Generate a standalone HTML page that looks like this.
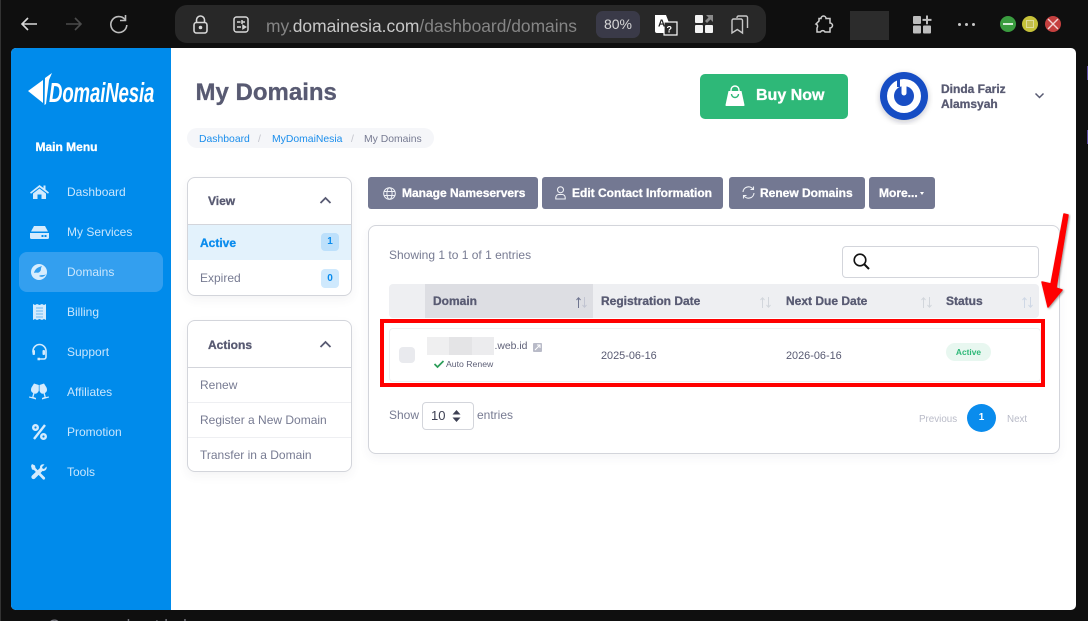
<!DOCTYPE html>
<html><head><meta charset="utf-8"><title>My Domains</title>
<style>
html,body{margin:0;padding:0;width:1088px;height:621px;overflow:hidden}
body{background:#0f0f0f;position:relative;font-family:"Liberation Sans",sans-serif}
.a{position:absolute}
.t{position:absolute;white-space:nowrap;line-height:16px}
.b{-webkit-text-stroke:.3px currentColor}
svg{position:absolute;overflow:visible}
.nav{color:#c9e6fd;font-size:12px;left:67px}
.card{position:absolute;left:187px;width:163px;background:#fff;border:1px solid #d3d5db;border-radius:8px;box-shadow:0 4px 10px rgba(60,60,90,.06);box-sizing:content-box}
.btn{position:absolute;top:177px;height:32px;background:#737892;border-radius:3px}
.g{color:#777b92;font-size:12px}
</style></head><body>
<div class="a" style="left:0;top:0;width:1px;height:621px;background:#333"></div>
<div class="a" style="left:1087px;top:66px;width:1px;height:14px;background:#5b4aa0"></div>
<div class="a" style="left:1087px;top:130px;width:1px;height:14px;background:#5b4aa0"></div>

<!-- browser chrome -->
<svg style="left:21px;top:17px" width="16" height="14" fill="none" stroke="#d8d8d8" stroke-width="1.6"><path d="M1 7H16M7 1L1 7L7 13"/></svg>
<svg style="left:66px;top:17px" width="16" height="14" fill="none" stroke="#4c4c4c" stroke-width="1.6"><path d="M0 7H15M9 1L15 7L9 13"/></svg>
<svg style="left:110px;top:15px" width="18" height="18" fill="none" stroke="#bdbdbd" stroke-width="1.6"><path d="M15 4.500A8 8 0 1 0 16.800 10"/><path d="M15.500 0V5.500H10" /></svg>
<div class="a" style="left:175px;top:5px;width:591px;height:38px;background:#282828;border-radius:12px"></div>
<svg style="left:193px;top:15px" width="15" height="19" fill="none" stroke="#d8d8d8" stroke-width="1.6"><rect x="1" y="7.500" width="13" height="10.500" rx="2.500"/><path d="M3.500 7.500V5a4 4 0 0 1 8 0V7.500"/><circle cx="7.500" cy="12.500" r="1" fill="#d8d8d8"/></svg>
<svg style="left:233px;top:16px" width="16" height="17" fill="none" stroke="#d8d8d8" stroke-width="1.5"><rect x="1" y="1" width="14" height="15" rx="2.500"/><path d="M4 6H7.500M9.500 6H12M9 4V8M4 11H8M10 9.500V12.500L12.500 11Z"/></svg>
<div class="t" style="left:266px;top:15px;font-size:17.4px;line-height:22px;color:#858585">my.<span style="color:#c8c8c8">domainesia.com</span>/dashboard/domains</div>
<div class="a" style="left:596px;top:11px;width:44px;height:27px;background:#3a3a48;border-radius:7px;color:#d8d8d8;font-size:14px;line-height:27px;text-align:center">80%</div>
<svg style="left:655px;top:14px" width="24" height="22"><path d="M0 1H11L18 19H2a2 2 0 0 1-2-2Z" fill="#fff"/><rect x="9" y="8" width="13" height="13" fill="#282828" stroke="#fff" stroke-width="1.2"/><text x="3" y="12.500" font-size="10" font-weight="700" font-family="Liberation Sans" fill="#222">A</text><text x="11.500" y="18.500" font-size="9" font-weight="700" font-family="Liberation Sans" fill="#fff">?</text></svg>
<svg style="left:695px;top:15px" width="20" height="20" fill="#f2f2f2"><rect x="0" y="0" width="8" height="8" rx="1"/><rect x="0" y="10" width="8" height="8" rx="1"/><rect x="10" y="10" width="8" height="8" rx="1"/><path d="M11 0H18V7L15.500 4.500L12 8L10 6L13.500 2.500Z" fill="#8a8a8a"/></svg>
<svg style="left:731px;top:15px" width="20" height="20" fill="none" stroke="#c8c8c8" stroke-width="1.400"><path d="M6 3V2.500a1.500 1.500 0 0 1 1.500-1.500H15a1.500 1.500 0 0 1 1.500 1.500V13"/><path d="M1 5.500A1.500 1.500 0 0 1 2.500 4H10a1.500 1.500 0 0 1 1.500 1.500V18L6.300 14.500L1 18Z"/></svg>
<svg style="left:814px;top:15px" width="20" height="19" fill="none" stroke="#cfcfcf" stroke-width="1.500"><path d="M7 3.500a2.500 2.500 0 0 1 5 0H16V8a2.500 2.500 0 0 1 0 5V17H11a2.500 2.500 0 0 0-4.500 0H3V13a2.500 2.500 0 0 0-1-4L5 6V3.500Z"/></svg>
<div class="a" style="left:850px;top:11px;width:39px;height:29px;background:#2c2c2c"></div>
<svg style="left:912px;top:15px" width="20" height="19" fill="#bdbdbd"><rect x="1" y="1" width="8" height="8" rx="1"/><rect x="1" y="10.500" width="8" height="8" rx="1"/><rect x="11" y="10.500" width="8" height="8" rx="1"/><path d="M14 0.500H16V3.900H19.500V5.900H16V9.300H14V5.900H10.500V3.900H14Z"/></svg>
<div class="a" style="left:958px;top:23px;width:3px;height:3px;background:#c8c8c8;border-radius:2px;box-shadow:7px 0 #c8c8c8,14px 0 #c8c8c8"></div>
<div class="a" style="left:1000px;top:16px;width:16px;height:16px;border-radius:50%;background:#3a9c3f"></div>
<div class="a" style="left:1003px;top:23px;width:10px;height:1.500px;background:#d8ecd8"></div>
<div class="a" style="left:1022px;top:16px;width:16px;height:16px;border-radius:50%;background:#c6c239"></div>
<div class="a" style="left:1026px;top:20px;width:8px;height:8px;background:#c2bd50;border:1px solid #dedb9a;box-sizing:border-box"></div>
<div class="a" style="left:1045px;top:16px;width:16px;height:16px;border-radius:50%;background:#c5403f"></div>
<svg style="left:1048px;top:19px" width="10" height="10" stroke="#f3d6d6" stroke-width="1.400"><path d="M0 0L10 10M10 0L0 10"/></svg>

<!-- partial text below window -->
<div class="a" style="left:0;top:610px;width:1088px;height:11px;overflow:hidden">
<div class="t" style="left:48px;top:7px;font-size:16.500px;line-height:18px;color:#77777f;letter-spacing:.2px">Cara membuat halaman</div>
</div>

<!-- window -->
<div class="a" style="left:11px;top:48px;width:1065px;height:562px;background:#fff;border-radius:5px"></div>
<div class="a" style="left:11px;top:48px;width:160px;height:562px;background:#008beb;border-radius:5px 0 0 5px"></div>

<!-- logo -->
<svg style="left:28px;top:73px" width="24" height="33" fill="#fff"><path d="M0 18L15 7V30ZM17 5L24 0L21 7L18 31L16.500 32Z"/></svg>
<div class="t" style="left:49px;top:77px;color:#fff;font-size:28px;line-height:32px;font-style:italic;font-weight:700;transform:scaleX(.665);transform-origin:0 0;letter-spacing:-.2px">DomaiNesia</div>
<div class="t b" style="left:35.500px;top:139px;color:#fff;font-size:12px;font-weight:700">Main Menu</div>
<div class="a" style="left:19px;top:252px;width:144px;height:40px;background:#339fef;border-radius:8px"></div>
<div class="t nav" style="top:184px">Dashboard</div>
<div class="t nav" style="top:224px">My Services</div>
<div class="t nav" style="top:264px">Domains</div>
<div class="t nav" style="top:304px">Billing</div>
<div class="t nav" style="top:344px">Support</div>
<div class="t nav" style="top:384px">Affiliates</div>
<div class="t nav" style="top:424px">Promotion</div>
<div class="t nav" style="top:464px">Tools</div>

<!-- nav icons -->
<svg style="left:30px;top:184px" width="19" height="16" fill="#d4ebfd"><path d="M9.500 1L13.500 4V1.500H15.500V5.500L19 8.500L18 9.800L9.500 3.200L1 9.800L0 8.500Z"/><path d="M3 9.500L9.500 4.500L16 9.500V15H11.500V10.500H7.500V15H3Z"/></svg>
<svg style="left:30px;top:226px" width="19" height="13" fill="#d4ebfd"><path d="M4 0H15L18 5.500H1Z"/><path d="M0 7H19V11.500a1.500 1.500 0 0 1-1.500 1.500H1.500A1.500 1.500 0 0 1 0 11.500Z"/><rect x="11.500" y="9" width="2" height="2" fill="#008beb"/><rect x="14.500" y="9" width="2" height="2" fill="#008beb"/></svg>
<svg style="left:31px;top:264px" width="16" height="16"><circle cx="8" cy="8" r="8" fill="#d7edfe"/><path d="M3 9C4 4 8 3 11 2C9 5 11 6 8.500 8C7 9.500 5 8 3 9ZM8 12C10 10.500 12 11.500 15 10.500C13 13 10 13.500 8 12Z" fill="#339fef"/></svg>
<svg style="left:33px;top:304px" width="13" height="16" fill="#d4ebfd"><path d="M0 0L2 1L4 0L6.500 1L9 0L11 1L13 0V16L11 15L9 16L6.500 15L4 16L2 15L0 16Z"/><path d="M3 4H10M3 7H10M3 10H10M3 13H10" stroke="#6db8f3" stroke-width="1"/></svg>
<svg style="left:31px;top:344px" width="17" height="16" fill="none" stroke="#d4ebfd" stroke-width="1.600"><path d="M2 8.500V7a6.500 6.500 0 0 1 13 0V13a2 2 0 0 1-2 2H8.500"/><rect x="1.500" y="6" width="2.500" height="5" rx="1" fill="#d4ebfd" stroke="none"/><rect x="11.500" y="6" width="2.500" height="5" rx="1" fill="#d4ebfd" stroke="none"/><path d="M6.500 15H9" stroke-width="2.500"/></svg>
<svg style="left:29px;top:383px" width="20" height="18" fill="#d4ebfd"><path d="M5 .5L9.800 2L9.800 7.500C9 10 7 11.200 5.500 10.500L4.500 14L7 15V16.500L0 14.500V13.500L3.200 14L4.200 10C2 9 1.500 7 2.500 4.500Z"/><path d="M15 .5L10.500 2L10.500 7.500C11 10 13 11.200 14.500 10.500L15.500 14L13 15V16.500L20 14.500V13.500L16.800 14L15.800 10C18 9 18.500 7 17.500 4.500Z"/></svg>
<svg style="left:32px;top:424px" width="15" height="16" fill="none" stroke="#d4ebfd" stroke-width="2.400"><path d="M13 1L2 15"/><circle cx="3.500" cy="3.500" r="2.300"/><circle cx="11.500" cy="12.500" r="2.300"/></svg>
<svg style="left:31px;top:464px" width="16" height="16" fill="#d4ebfd"><path d="M1 0L4 1.500L4.500 4L14 13.500a1.500 1.500 0 0 1-2 2L3 6L1 5.500L0 2Z"/><path d="M15.500 2.500L13 5L11.500 4.500L11 3L13.500 .5C11 -.5 8.500 1.500 9 4L1 11.500a2 2 0 0 0 3 3L11.500 7C14 7.500 16.500 5 15.500 2.500Z"/></svg>

<!-- header -->
<div class="t b" style="left:195.500px;top:79px;font-size:24px;line-height:28px;font-weight:700;color:#585a72">My Domains</div>
<div class="a" style="left:187px;top:128px;width:247px;height:20px;background:#f5f6f9;border-radius:10px"></div>
<div class="t" style="left:199px;top:132px;font-size:10.400px;color:#1b8eec">Dashboard</div>
<div class="t" style="left:258px;top:132px;font-size:10.400px;color:#c3c4cc">/</div>
<div class="t" style="left:272px;top:132px;font-size:10.400px;color:#1b8eec">MyDomaiNesia</div>
<div class="t" style="left:351px;top:132px;font-size:10.400px;color:#c3c4cc">/</div>
<div class="t" style="left:364px;top:132px;font-size:10.400px;color:#777b92">My Domains</div>

<div class="a" style="left:700px;top:74px;width:148px;height:45px;background:#2eb878;border-radius:5px"></div>
<svg style="left:725px;top:85px" width="20" height="22" fill="#fff"><path d="M3 7H16L19 21a.8.8 0 0 1-1 1H1a.8.8 0 0 1-1-1Z" transform="translate(.5 -1)"/><path d="M6 7V5a4 4 0 0 1 8 0V7" fill="none" stroke="#fff" stroke-width="1.400"/><path d="M6.500 9A3.500 3.500 0 0 0 13.500 9" fill="none" stroke="#2eb878" stroke-width="1.400"/></svg>
<div class="t b" style="left:756px;top:87px;font-size:16px;line-height:18px;font-weight:700;color:#fff">Buy Now</div>

<svg style="left:880px;top:72px" width="48" height="48"><defs><filter id="s"><feDropShadow dx="0" dy="2" stdDeviation="3" flood-color="#223" flood-opacity=".25"/></filter></defs><circle cx="24" cy="24" r="24" fill="#194ec4" filter="url(#s)"/><circle cx="24" cy="24" r="17" fill="#fff"/><circle cx="24" cy="24" r="10" fill="#194ec4"/><path d="M24 10V21" stroke="#fff" stroke-width="5" stroke-linecap="round"/><path d="M18.500 7V15" stroke="#194ec4" stroke-width="3"/></svg>
<div class="t b" style="left:941px;top:81px;font-size:12px;font-weight:700;color:#585a72">Dinda Fariz</div>
<div class="t b" style="left:941px;top:96px;font-size:12px;font-weight:700;color:#585a72">Alamsyah</div>
<svg style="left:1035px;top:93px" width="9" height="6" fill="none" stroke="#585a72" stroke-width="1.500"><path d="M.5 .5L4.500 4.500L8.500 .5"/></svg>

<!-- left cards -->
<div class="card" style="top:177px;height:117px;overflow:hidden">
  <div class="a" style="left:0;top:46px;width:164px;height:35px;background:#e3f2fc;border-top:1px solid #d3d5db"></div>
</div>
<div class="t b" style="left:208px;top:193px;font-size:12px;font-weight:700;color:#585a72">View</div>
<svg style="left:320px;top:197px" width="11" height="7" fill="none" stroke="#585a72" stroke-width="1.800"><path d="M.5 6L5.500 1L10.500 6"/></svg>
<div class="t b" style="left:200px;top:235px;font-size:12px;font-weight:700;color:#0a8ced">Active</div>
<div class="a" style="left:321px;top:233px;width:18px;height:18px;background:#bde0fb;border-radius:4px;color:#0a8ced;font-size:10px;font-weight:700;line-height:18px;text-align:center">1</div>
<div class="t g" style="left:200px;top:270px">Expired</div>
<div class="a" style="left:321px;top:268.500px;width:18px;height:19px;background:#cfe9fd;border-radius:4px;color:#0a8ced;font-size:10px;font-weight:700;line-height:19px;text-align:center">0</div>

<div class="card" style="top:320px;height:150px"></div>
<div class="a" style="left:188px;top:367px;width:163px;height:1px;background:#d3d5db"></div>
<div class="a" style="left:188px;top:402px;width:163px;height:1px;background:#eeeff2"></div>
<div class="a" style="left:188px;top:437px;width:163px;height:1px;background:#eeeff2"></div>
<div class="t b" style="left:208px;top:337px;font-size:12px;font-weight:700;color:#585a72">Actions</div>
<svg style="left:320px;top:341px" width="11" height="7" fill="none" stroke="#585a72" stroke-width="1.800"><path d="M.5 6L5.500 1L10.500 6"/></svg>
<div class="t g" style="left:200px;top:377px">Renew</div>
<div class="t g" style="left:200px;top:412px">Register a New Domain</div>
<div class="t g" style="left:200px;top:447px">Transfer in a Domain</div>

<!-- buttons -->
<div class="btn" style="left:368px;width:170px"></div>
<div class="btn" style="left:542px;width:181px"></div>
<div class="btn" style="left:729px;width:136px"></div>
<div class="btn" style="left:869px;width:66px"></div>
<svg style="left:383px;top:187px" width="13" height="13" fill="none" stroke="#eef0f5" stroke-width="1"><circle cx="6.500" cy="6.500" r="5.800"/><ellipse cx="6.500" cy="6.500" rx="2.600" ry="5.800"/><path d="M1 4.500H12M1 8.500H12"/></svg>
<div class="t b" style="left:402px;top:185px;font-size:12px;font-weight:700;color:#fff">Manage Nameservers</div>
<svg style="left:555px;top:186px" width="11" height="14" fill="none" stroke="#eef0f5" stroke-width="1.100"><circle cx="5.500" cy="3.800" r="3"/><path d="M.8 13V11.500A3 3 0 0 1 3.800 8.500H7.200A3 3 0 0 1 10.200 11.500V13Z"/></svg>
<div class="t b" style="left:572px;top:185px;font-size:12px;font-weight:700;color:#fff">Edit Contact Information</div>
<svg style="left:742px;top:186px" width="13" height="13" fill="none" stroke="#eef0f5" stroke-width="1.100"><path d="M1 6A5.500 5.500 0 0 1 11 3.200M12 7A5.500 5.500 0 0 1 2 9.800"/><path d="M11.500 .5V3.500H8.500M1.500 12.500V9.500H4.500"/></svg>
<div class="t b" style="left:760px;top:185px;font-size:12px;font-weight:700;color:#fff">Renew Domains</div>
<div class="t b" style="left:879px;top:185px;font-size:12px;font-weight:700;color:#fff">More...</div>
<div class="a" style="left:920px;top:192px;width:0;height:0;border:2.500px solid transparent;border-top:3px solid #fff;border-bottom:0"></div>

<!-- table card -->
<div class="a" style="left:368px;top:225px;width:690px;height:227px;background:#fff;border:1px solid #d3d5db;border-radius:8px;box-shadow:0 4px 10px rgba(60,60,90,.05)"></div>
<div class="t g" style="left:389px;top:247px">Showing 1 to 1 of 1 entries</div>
<div class="a" style="left:842px;top:246px;width:195px;height:30px;border:1px solid #d3d5db;border-radius:4px;background:#fff"></div>
<svg style="left:853px;top:253px" width="17" height="17" fill="none" stroke="#111" stroke-width="1.600"><circle cx="7" cy="7" r="5.800"/><path d="M11 11L16 16" stroke-width="2"/></svg>

<div class="a" style="left:389px;top:284px;width:650px;height:34px;background:#eeeff2;border-radius:4px"></div>
<div class="a" style="left:425px;top:284px;width:168px;height:34px;background:#dddee3"></div>
<div class="t b" style="left:433px;top:293px;font-size:12px;font-weight:700;color:#585a72">Domain</div>
<div class="t b" style="left:601px;top:293px;font-size:12px;font-weight:700;color:#585a72">Registration Date</div>
<div class="t b" style="left:786px;top:293px;font-size:12px;font-weight:700;color:#585a72">Next Due Date</div>
<div class="t b" style="left:946px;top:293px;font-size:12px;font-weight:700;color:#585a72">Status</div>
<svg style="left:576px;top:297px" width="11" height="11" fill="none" stroke-width="1"><path d="M2.500 11V.8M.5 3L2.500 .8L4.500 3" stroke="#6f7590"/><path d="M8.500 0V10.200M6.500 8L8.500 10.200L10.500 8" stroke="#c2c5d2"/></svg>
<svg style="left:760px;top:297px" width="11" height="11" fill="none" stroke-width="1" stroke="#d2d6dc"><path d="M2.500 11V.8M.5 3L2.500 .8L4.500 3"/><path d="M8.500 0V10.200M6.500 8L8.500 10.200L10.500 8"/></svg>
<svg style="left:921px;top:297px" width="11" height="11" fill="none" stroke-width="1" stroke="#d2d6dc"><path d="M2.500 11V.8M.5 3L2.500 .8L4.500 3"/><path d="M8.500 0V10.200M6.500 8L8.500 10.200L10.500 8"/></svg>
<svg style="left:1022px;top:297px" width="11" height="11" fill="none" stroke-width="1" stroke="#cfd8e6"><path d="M2.500 11V.8M.5 3L2.500 .8L4.500 3"/><path d="M8.500 0V10.200M6.500 8L8.500 10.200L10.500 8"/></svg>

<div class="a" style="left:389px;top:328px;width:650px;height:52px;border:1px solid #eeeff2;border-radius:4px;box-sizing:content-box"></div>
<div class="a" style="left:399px;top:347px;width:16px;height:16px;background:#e9eaee;border-radius:4px"></div>
<div class="a" style="left:427px;top:337px;width:22px;height:18px;background:#efeff0"></div>
<div class="a" style="left:449px;top:337px;width:23px;height:18px;background:#e4e4e6"></div>
<div class="a" style="left:472px;top:337px;width:22px;height:18px;background:#ececee"></div>
<div class="t" style="left:494.500px;top:339px;font-size:10.400px;color:#5f6178">.web.id</div>
<div class="a" style="left:533px;top:343px;width:9px;height:9px;background:#b9bbc8;border-radius:1px"></div>
<svg style="left:534px;top:344px" width="7" height="7" stroke="#fff" stroke-width="1" fill="none"><path d="M1 6L6 1M3 1H6V4"/></svg>
<svg style="left:434px;top:360px" width="10" height="8" fill="none" stroke="#2c9d58" stroke-width="1.700"><path d="M.5 4L3.500 7L9.500 1"/></svg>
<div class="t" style="left:446px;top:356px;font-size:8.700px;color:#5f6178">Auto Renew</div>
<div class="t" style="left:601px;top:348px;font-size:10.900px;color:#585a72">2025-06-16</div>
<div class="t" style="left:786px;top:348px;font-size:10.900px;color:#585a72">2026-06-16</div>
<div class="a" style="left:946px;top:343px;width:45px;height:18px;background:#e8f7f0;border-radius:9px;color:#2eb878;font-size:8.400px;font-weight:700;line-height:18px;text-align:center">Active</div>

<!-- red box -->
<div class="a" style="left:380px;top:319px;width:665px;height:68px;box-sizing:border-box;border:4px solid #f00"></div>
<!-- arrow -->
<svg style="left:1035px;top:205px" width="40" height="120"><defs><filter id="as"><feDropShadow dx="1" dy="1" stdDeviation="1" flood-color="#000" flood-opacity=".4"/></filter></defs><path d="M29 9L16 79L7 77L13 102L27 85L21 83L33 10Z" fill="#f00" stroke="#f00" stroke-width="1.500" stroke-linejoin="round" filter="url(#as)"/></svg>

<!-- footer -->
<div class="t g" style="left:389px;top:407px">Show</div>
<div class="a" style="left:422px;top:402px;width:50px;height:26px;border:1px solid #d3d5db;border-radius:4px"></div>
<div class="t" style="left:431px;top:408px;font-size:13px;color:#3c3f52">10</div>
<svg style="left:452px;top:410px" width="9" height="12" fill="#3c3f52"><path d="M4.500 0L8.500 4.500H.5ZM.5 7.500H8.500L4.500 12Z"/></svg>
<div class="t g" style="left:477px;top:407px">entries</div>
<div class="t" style="left:919px;top:412px;font-size:9.800px;color:#b9bbc8">Previous</div>
<div class="a" style="left:967px;top:404px;width:29px;height:28px;border-radius:50%;background:#0a8ced;color:#fff;font-size:10px;font-weight:700;line-height:28px;text-align:center">1</div>
<div class="t" style="left:1007px;top:412px;font-size:9.800px;color:#b9bbc8">Next</div>
</body></html>
